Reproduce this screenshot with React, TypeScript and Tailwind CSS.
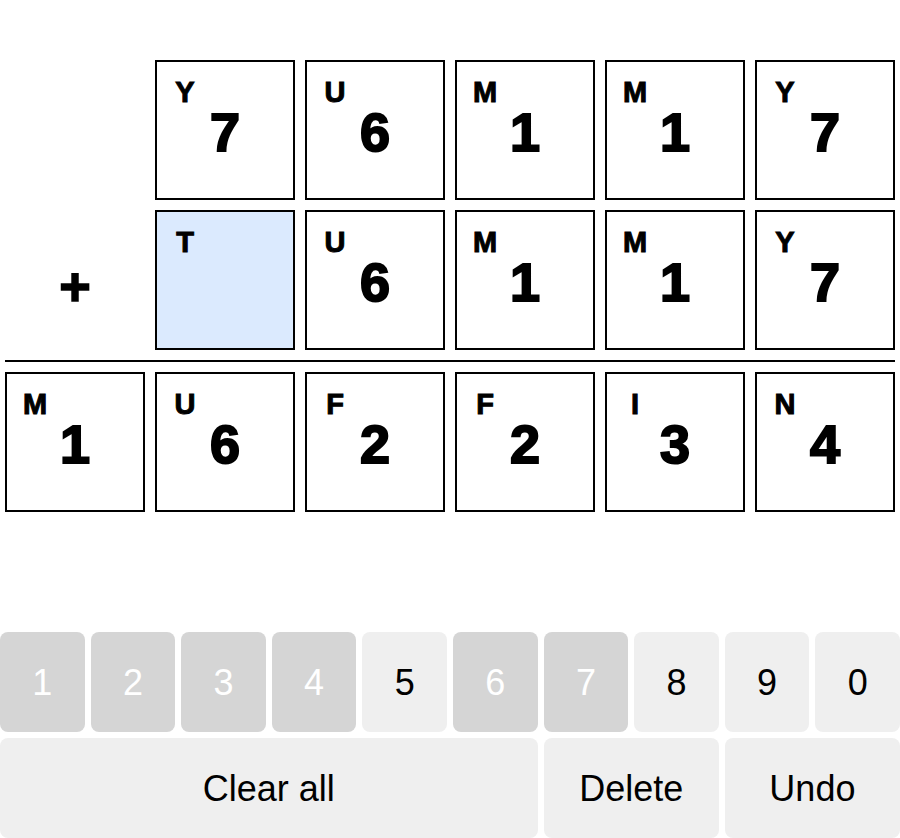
import React from 'react';

type Cell = { letter: string; digit: string; active?: boolean };

const ROW_A: Cell[] = [
  { letter: 'Y', digit: '7' },
  { letter: 'U', digit: '6' },
  { letter: 'M', digit: '1' },
  { letter: 'M', digit: '1' },
  { letter: 'Y', digit: '7' },
];

const ROW_B: Cell[] = [
  { letter: 'T', digit: '', active: true },
  { letter: 'U', digit: '6' },
  { letter: 'M', digit: '1' },
  { letter: 'M', digit: '1' },
  { letter: 'Y', digit: '7' },
];

const ROW_SUM: Cell[] = [
  { letter: 'M', digit: '1' },
  { letter: 'U', digit: '6' },
  { letter: 'F', digit: '2' },
  { letter: 'F', digit: '2' },
  { letter: 'I', digit: '3' },
  { letter: 'N', digit: '4' },
];

const KEYS = [
  { k: '1', used: true },
  { k: '2', used: true },
  { k: '3', used: true },
  { k: '4', used: true },
  { k: '5', used: false },
  { k: '6', used: true },
  { k: '7', used: true },
  { k: '8', used: false },
  { k: '9', used: false },
  { k: '0', used: false },
];

// heavier glyphs than Arial Bold gives on its own
const Box: React.FC<{ cell: Cell }> = ({ cell }) => (
  <div
    className={`relative w-[140px] h-[140px] border-2 border-black flex items-center justify-center pt-1 ${
      cell.active ? 'bg-blue-100' : 'bg-white'
    }`}
  >
    <span className="absolute top-[16px] left-[8px] w-[40px] text-center text-[29px] font-bold leading-none [-webkit-text-stroke:1px_black]">
      {cell.letter}
    </span>
    <span className="text-[54px] font-bold leading-none [-webkit-text-stroke:2px_black]">{cell.digit}</span>
  </div>
);

const App: React.FC = () => {
  return (
    <div className="h-screen w-[900px] flex flex-col bg-white text-black font-['Liberation_Sans',Arial,sans-serif]">
      <div className="px-[5px] pt-[60px] flex flex-col gap-[10px]">
        <div className="flex gap-[10px]">
          <div className="w-[140px] h-[140px]" />
          {ROW_A.map((c, i) => (
            <Box key={i} cell={c} />
          ))}
        </div>
        <div className="flex gap-[10px]">
          <div className="w-[140px] h-[140px] flex items-center justify-center pt-[12px] text-[54px] font-bold leading-none [-webkit-text-stroke:1.5px_black]">
            +
          </div>
          {ROW_B.map((c, i) => (
            <Box key={i} cell={c} />
          ))}
        </div>
        <div className="h-[2px] bg-black" />
        <div className="flex gap-[10px]">
          {ROW_SUM.map((c, i) => (
            <Box key={i} cell={c} />
          ))}
        </div>
      </div>

      <div className="mt-auto grid grid-cols-10 gap-[6px]">
        {KEYS.map(({ k, used }) => (
          <button
            key={k}
            className={`h-[100px] rounded-lg text-4xl pt-0.5 ${
              used ? 'bg-[#d5d5d5] text-white' : 'bg-[#efefef] text-black'
            }`}
          >
            {k}
          </button>
        ))}
        <button className="col-span-6 h-[100px] rounded-lg bg-[#efefef] text-4xl text-black pt-0.5">Clear all</button>
        <button className="col-span-2 h-[100px] rounded-lg bg-[#efefef] text-4xl text-black pt-0.5">Delete</button>
        <button className="col-span-2 h-[100px] rounded-lg bg-[#efefef] text-4xl text-black pt-0.5">Undo</button>
      </div>
    </div>
  );
};

export default App;
